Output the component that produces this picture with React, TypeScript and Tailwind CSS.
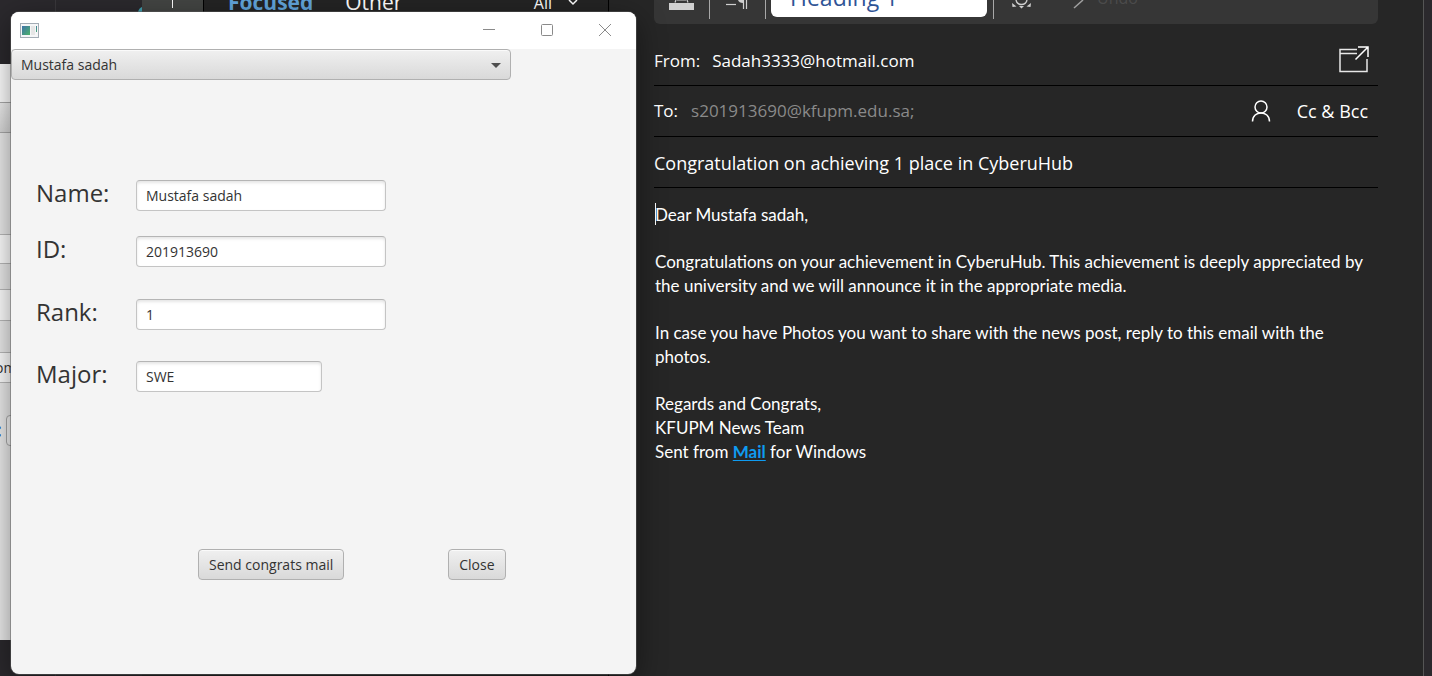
import React from "react";

const people = ["Mustafa sadah"];

const fields = [
  { id: "name", label: "Name:", value: "Mustafa sadah", row: "mt-[100px]", width: "w-[250px]" },
  { id: "student-id", label: "ID:", value: "201913690", row: "mt-[25px]", width: "w-[250px]" },
  { id: "rank", label: "Rank:", value: "1", row: "mt-8", width: "w-[250px]" },
  { id: "major", label: "Major:", value: "SWE", row: "mt-[31px]", width: "w-[186px]" },
];

const raised =
  "rounded border border-[#b0b0b0] bg-linear-to-b from-[#f0f0f0] to-[#d9d9d9] text-sm text-[#333] shadow-[inset_0_1px_0_#fafafa]";

function MailSidebar() {
  return (
    <aside className="flex w-[609px] shrink-0 border-r border-black bg-[#242424]">
      <div className="flex w-[142px] shrink-0 justify-end overflow-hidden bg-[#2b292d]">
        <div className="w-[87px] border-l border-[#3a383c]">
          <svg className="ml-auto h-3 w-3" viewBox="0 0 12 12" aria-hidden="true">
            <path d="M8 12 Q9 8 12 7 V12 Z" fill="#3f9fb0" />
          </svg>
        </div>
      </div>
      <div className="flex h-3 w-[61px] shrink-0 justify-center bg-[#434543]">
        <div className="h-2 w-px bg-white" />
      </div>
      <div className="flex h-3 flex-1 items-end overflow-hidden border-l border-black pl-6 pr-7 text-white">
        <strong className="text-[21px] leading-5 font-bold text-[#62a5dc]">Focused</strong>
        <span className="ml-8 text-[21px] leading-5">Other</span>
        <span className="ml-auto text-base leading-[18px]">All</span>
        <svg className="ml-4 h-3 w-3" viewBox="0 0 12 12" fill="none" aria-hidden="true">
          <path d="M1 0 L5 4 L9 0" stroke="#fff" strokeWidth="1.5" />
        </svg>
      </div>
    </aside>
  );
}

function FormatBar() {
  return (
    <div className="flex h-6 items-start overflow-hidden rounded-b-md bg-[#363636]">
      <svg className="ml-[14px] h-6 w-7 shrink-0" viewBox="0 0 28 24" aria-hidden="true">
        <path d="M7 2.500 L8 0 M20 2.500 L19 0 M9 0 H18" stroke="#cfcfcf" strokeWidth="1.2" fill="none" />
        <rect x="1" y="3" width="25" height="7" fill="#d0d0d0" />
      </svg>
      <div className="ml-[13px] h-[19px] w-px bg-[#a8a8a8]" />
      <svg className="ml-4 h-6 w-6 shrink-0" viewBox="0 0 24 24" aria-hidden="true">
        <path d="M0 4.500 H10" stroke="#cfcfcf" strokeWidth="1.2" />
        <path d="M12 0 H17 V3 Q13 3 12 0 Z" fill="#cfcfcf" />
        <path d="M17.500 0 V9 M20.500 0 V9" stroke="#cfcfcf" strokeWidth="1.2" />
      </svg>
      <div className="ml-[15px] h-[19px] w-px bg-[#a8a8a8]" />
      <button className="ml-[5px] flex h-[17px] w-[216px] shrink-0 items-end overflow-hidden rounded-b-md bg-white pl-[19px] text-[#2f5496]">
        <span className="text-[23px] leading-10">Heading 1</span>
      </button>
      <div className="ml-[6px] h-[19px] w-px bg-[#a8a8a8]" />
      <svg className="ml-[17px] h-6 w-6 shrink-0" viewBox="0 0 24 24" fill="none" aria-hidden="true">
        <path d="M5 0 Q6 4.500 10.500 4.500 Q15 4.500 16 0" stroke="#cfcfcf" strokeWidth="1.4" />
        <path d="M8 6 H13 L10.500 8.500 Z M1 3 L1.500 7 L5.500 6.500 Z M20 3 L19.500 7 L15.500 6.500 Z" fill="#cfcfcf" />
      </svg>
      <svg className="ml-9 h-6 w-4 shrink-0" viewBox="0 0 16 24" aria-hidden="true">
        <path d="M3 8 L12 0" stroke="#a0a0a0" strokeWidth="1.5" />
      </svg>
      <div className="ml-[10px] flex h-2 items-end overflow-hidden text-[#4b4b4b]">
        <span className="text-base leading-5">Undo</span>
      </div>
    </div>
  );
}

function Compose() {
  return (
    <main className="min-w-0 flex-1 border-r border-[#555] bg-[#262626] pr-[45px] pl-[45px] text-white">
      <FormatBar />
      <div className="flex h-[62px] items-center border-b border-black pt-3">
        <span className="text-[17px] leading-6">From:</span>
        <span className="ml-3 text-[17px] leading-6">Sadah3333@hotmail.com</span>
        <button className="mr-[9px] mb-1 ml-auto" aria-label="Open in new window">
          <svg className="block h-8 w-8" viewBox="0 0 32 32" fill="none" aria-hidden="true">
            <path d="M20 6.5 H3 V28.5 H30 V16 M3 10.5 H20" stroke="#e8e8e8" strokeWidth="1.5" />
            <path d="M21 4 H31 V14 M30.500 4.500 L18.500 16.500" stroke="#fff" strokeWidth="1.5" />
          </svg>
        </button>
      </div>
      <div className="flex h-[51px] items-center border-b border-black">
        <label htmlFor="to" className="text-[17px] leading-6">To:</label>
        <input
          id="to"
          defaultValue="s201913690@kfupm.edu.sa;"
          className="ml-[13px] min-w-0 flex-1 bg-transparent text-[17px] leading-6 text-[#8a8a8a] outline-none"
        />
        <button className="mr-[26px]" aria-label="Choose contacts">
          <svg className="block h-6 w-5" viewBox="0 0 20 24" fill="none" stroke="#fff" strokeWidth="1.5" aria-hidden="true">
            <circle cx="10" cy="8" r="6" />
            <path d="M1.5 22.500 C1.5 11 18.500 11 18.500 22.500" />
          </svg>
        </button>
        <button className="mr-[10px] text-lg leading-6">Cc &amp; Bcc</button>
      </div>
      <div className="flex h-[51px] items-center border-b border-black pt-px">
        <input
          aria-label="Subject"
          defaultValue="Congratulation on achieving 1 place in CyberuHub"
          className="w-full bg-transparent text-lg leading-6 outline-none"
        />
      </div>
      <article className="flex flex-col gap-[23px] pt-[15px] pl-px font-['Lato','Liberation_Sans',sans-serif] text-[17px] leading-6">
        <p className="relative">
          <span className="absolute top-0 left-0 h-[22px] w-px bg-white" />
          Dear Mustafa sadah,
        </p>
        <p>
          Congratulations on your achievement in CyberuHub. This achievement is deeply appreciated by
          the university and we will announce it in the appropriate media.
        </p>
        <p>
          In case you have Photos you want to share with the news post, reply to this email with the
          photos.
        </p>
        <p>
          Regards and Congrats,
          <br />
          KFUPM News Team
          <br />
          Sent from{" "}
          <a href="#mail" className="font-bold text-[#0f9bf0] underline underline-offset-2">Mail</a> for Windows
        </p>
      </article>
    </main>
  );
}

function WindowBehind() {
  return (
    <div
      aria-hidden="true"
      className="absolute top-16 left-0 h-[576px] w-6 overflow-hidden bg-[#ececec] text-sm"
    >
      <div className="h-[38px] bg-white" />
      <div className="h-[31px] border-y border-[#aaa] bg-linear-to-b from-[#f0f0f0] to-[#d9d9d9]" />
      <div className="h-[102px] border-b border-[#bbb]" />
      <div className="h-[29px] border-b border-[#bbb] bg-white" />
      <div className="h-[26px] border-b border-[#bbb]" />
      <div className="h-[31px] border-b border-[#bbb] bg-white" />
      <div className="h-[32px] border-b border-[#bbb]" />
      <div className="flex h-[30px] items-center border-b border-[#bbb] bg-white text-[#333]">
        <span className="-ml-[5px]">om</span>
      </div>
      <div className="flex items-center pt-[31px] text-xl leading-8 text-[#1a3fb0]">
        <span className="-ml-1 font-bold">:</span>
        <div className="ml-1 h-[31px] w-8 rounded border border-[#aaa] bg-[#f4f4f4]" />
      </div>
    </div>
  );
}

function StudentDialog() {
  return (
    <section
      aria-label="Student"
      className="absolute top-3 left-[11px] flex h-[662px] w-[625px] flex-col overflow-hidden rounded-lg bg-[#f4f4f4] text-[#333] shadow-[0_0_0_1px_rgba(90,90,90,0.5),0_8px_30px_rgba(0,0,0,0.45)]"
    >
      <header className="flex h-[37px] shrink-0 items-center bg-white pr-[25px] pb-px pl-[9px]">
        <svg className="h-[15px] w-[19px]" viewBox="0 0 19 15" aria-hidden="true">
          <defs>
            <linearGradient id="app-tile" x1="0" y1="0" x2="1" y2="1">
              <stop offset="0" stopColor="#3f72a8" />
              <stop offset="1" stopColor="#4bb36a" />
            </linearGradient>
          </defs>
          <rect x="0.5" y="0.5" width="18" height="14" fill="#f5f6f7" stroke="#a3acb5" />
          <rect x="2" y="3" width="8" height="9" fill="url(#app-tile)" />
          <rect x="11" y="3" width="4" height="9" fill="#e6e6e6" />
          <rect x="16" y="3" width="1" height="6" fill="url(#app-tile)" />
        </svg>
        <div className="ml-auto flex items-center gap-[46px] text-[#8a8a8a]">
          <button aria-label="Minimize">
            <svg className="block h-3 w-3" viewBox="0 0 12 12" aria-hidden="true">
              <path d="M0 5.500 H12" stroke="currentColor" />
            </svg>
          </button>
          <button aria-label="Maximize">
            <svg className="block h-3 w-3" viewBox="0 0 12 12" fill="none" aria-hidden="true">
              <rect x="0.5" y="0.5" width="11" height="11" rx="1" stroke="currentColor" />
            </svg>
          </button>
          <button aria-label="Close window">
            <svg className="block h-3 w-3" viewBox="0 0 12 12" aria-hidden="true">
              <path d="M0 0 L12 12 M12 0 L0 12" stroke="currentColor" />
            </svg>
          </button>
        </div>
      </header>

      <div className="relative w-[500px]">
        <select aria-label="Student" className={`block h-[31px] w-full appearance-none px-[9px] ${raised}`}>
          {people.map((person) => (
            <option key={person}>{person}</option>
          ))}
        </select>
        <svg className="pointer-events-none absolute top-[14px] right-[10px] h-[5px] w-[10px]" viewBox="0 0 10 5" aria-hidden="true">
          <path d="M0 0 H10 L5 5 Z" fill="#4f4f4f" />
        </svg>
      </div>

      <form onSubmit={(event) => event.preventDefault()}>
        {fields.map((field) => (
          <div key={field.id} className={`flex h-[31px] items-center pl-[25px] ${field.row}`}>
            <label htmlFor={field.id} className="w-[100px] pb-[6px] text-2xl leading-8">
              {field.label}
            </label>
            <input
              id={field.id}
              defaultValue={field.value}
              className={`h-[31px] rounded border border-[#c4c4c4] border-t-[#b5b5b5] bg-white px-[9px] text-sm shadow-[inset_0_2px_3px_rgba(0,0,0,0.1)] outline-none ${field.width}`}
            />
          </div>
        ))}
        <div className="mt-[157px] flex gap-[104px] pl-[187px]">
          <button className={`h-[31px] px-[10px] ${raised}`}>Send congrats mail</button>
          <button className={`h-[31px] px-[10px] ${raised}`}>Close</button>
        </div>
      </form>
    </section>
  );
}

export default function App() {
  return (
    <div className="relative flex min-h-screen overflow-hidden bg-[#2b292d] pr-2 font-['Open_Sans','Noto_Sans',sans-serif]">
      <MailSidebar />
      <Compose />
      <WindowBehind />
      <StudentDialog />
    </div>
  );
}
